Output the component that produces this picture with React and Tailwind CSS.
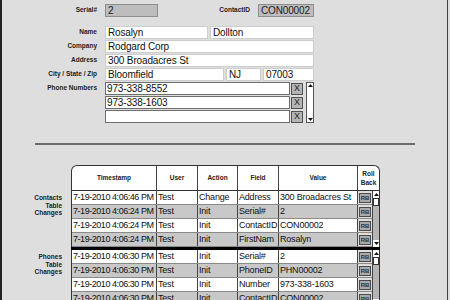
import React from 'react';

const label = "text-[6.5px] font-bold text-[#222] text-right leading-none whitespace-nowrap";
const field = "h-[13px] bg-white border border-[#cdcdcd] pl-[2px] text-[10px] tracking-[-0.15px] leading-[11px] text-[#111] whitespace-nowrap overflow-hidden";
const roField = "h-[13px] bg-[#bdbdbd] border border-[#8e8e8e] pl-[2px] text-[10px] tracking-[-0.15px] leading-[11px] text-[#222] whitespace-nowrap overflow-hidden";

const contacts = [
  ['7-19-2010 4:06:46 PM', 'Test', 'Change', 'Address', '300 Broadacres St'],
  ['7-19-2010 4:06:24 PM', 'Test', 'Init', 'Serial#', '2'],
  ['7-19-2010 4:06:24 PM', 'Test', 'Init', 'ContactID', 'CON00002'],
  ['7-19-2010 4:06:24 PM', 'Test', 'Init', 'FirstNam', 'Rosalyn'],
];

const phones = [
  ['7-19-2010 4:06:30 PM', 'Test', 'Init', 'Serial#', '2'],
  ['7-19-2010 4:06:30 PM', 'Test', 'Init', 'PhoneID', 'PHN00002'],
  ['7-19-2010 4:06:30 PM', 'Test', 'Init', 'Number', '973-338-1603'],
  ['7-19-2010 4:06:30 PM', 'Test', 'Init', 'ContactID', 'CON00002'],
];

const Up = () => (
  <svg width="5" height="3" viewBox="0 0 5 3"><path d="M0 3 L2.5 0 L5 3 Z" fill="#111" /></svg>
);
const Down = () => (
  <svg width="5" height="3" viewBox="0 0 5 3"><path d="M0 0 L2.5 3 L5 0 Z" fill="#111" /></svg>
);

const cell = "h-full border-r border-[#444] pl-[1px] overflow-hidden whitespace-nowrap flex items-center";

const TableGroup = ({ rows, title }) => (
  <div className="flex">
    <div className="w-[69px] pr-[9px] pt-[3px] text-[6.5px] font-bold text-[#222] text-right leading-[7.5px]">
      {title.map((t) => <div key={t}>{t}</div>)}
    </div>
    <div className="flex border-x border-[#333]">
      <div className="flex flex-col">
        {rows.map((r, i) => (
          <div key={i} className={`flex h-[14px] border-b border-[#8a8a8a] text-[9px] tracking-[-0.2px] text-[#111] ${i % 2 ? 'bg-[#c8c8c8]' : 'bg-white'}`}>
            <div className={`${cell} w-[85px] tracking-[-0.45px]`}>{r[0]}</div>
            <div className={`${cell} w-[41px]`}>{r[1]}</div>
            <div className={`${cell} w-[40px]`}>{r[2]}</div>
            <div className={`${cell} w-[41px]`}>{r[3]}</div>
            <div className={`${cell} w-[79px]`}>{r[4]}</div>
            <div className="w-[14px] h-full flex items-center justify-center bg-[#dedede]">
              <div className="w-[12px] h-[10px] bg-[#a9a9a9] border border-[#4a4a4a] text-[6px] font-bold text-[#333] leading-none tracking-normal flex items-center justify-center">RB</div>
            </div>
          </div>
        ))}
      </div>
      <div className="w-[7px] flex flex-col bg-[#b5b5b5] border-l border-[#444]">
        <div className="h-[7px] bg-white flex items-center justify-center"><Up /></div>
        <div className="h-[8px] bg-white border border-[#333]" />
        <div className="flex-1" />
        <div className="h-[7px] bg-white flex items-center justify-center"><Down /></div>
      </div>
    </div>
  </div>
);

export default function App() {
  return (
    <div className="w-[450px] h-[300px] overflow-hidden bg-[#dedede] font-['Liberation_Sans',Arial,sans-serif]">
      <div className="w-[448px] h-[300px] border-l-2 border-r border-l-[#222] border-r-[#444] overflow-hidden">
        <div className="pt-[4px]">
          <div className="flex items-center h-[13px]">
            <div className={`w-[95px] ${label}`}>Serial#</div>
            <div className={`ml-[8px] w-[53px] ${roField}`}>2</div>
            <div className={`w-[92px] ${label}`}>ContactID</div>
            <div className={`ml-[8px] w-[56px] ${roField}`}>CON00002</div>
          </div>

          <div className="flex flex-col gap-[1px] mt-[9px]">
            <div className="flex items-center">
              <div className={`w-[95px] ${label}`}>Name</div>
              <div className={`ml-[8px] w-[103px] ${field}`}>Rosalyn</div>
              <div className={`ml-[2px] w-[104px] ${field}`}>Dollton</div>
            </div>
            <div className="flex items-center">
              <div className={`w-[95px] ${label}`}>Company</div>
              <div className={`ml-[8px] w-[209px] ${field}`}>Rodgard Corp</div>
            </div>
            <div className="flex items-center">
              <div className={`w-[95px] ${label}`}>Address</div>
              <div className={`ml-[8px] w-[209px] ${field}`}>300 Broadacres St</div>
            </div>
            <div className="flex items-center">
              <div className={`w-[95px] ${label}`}>City / State / Zip</div>
              <div className={`ml-[8px] w-[119px] ${field}`}>Bloomfield</div>
              <div className={`ml-[2px] w-[35px] ${field}`}>NJ</div>
              <div className={`ml-[2px] w-[51px] ${field}`}>07003</div>
            </div>

            <div className="flex">
              <div className={`w-[95px] h-[13px] flex items-center justify-end ${label}`}>Phone Numbers</div>
              <div className="ml-[8px] flex">
                <div className="flex flex-col gap-[1px]">
                  {['973-338-8552', '973-338-1603', ''].map((p, i) => (
                    <div key={i} className="flex items-center gap-[1px]">
                      <div className="w-[185px] h-[13px] bg-white border border-[#6e6e6e] pl-[1px] text-[10px] tracking-[-0.15px] leading-[11px] text-[#111]">{p}</div>
                      <div className="w-[12px] h-[12px] bg-[#b4b4b4] border border-[#505050] text-[9px] leading-none text-[#222] flex items-center justify-center">X</div>
                    </div>
                  ))}
                </div>
                <div className="ml-[3px] w-[8px] h-[41px] bg-white border border-[#555] flex flex-col justify-between items-center py-[1px]">
                  <Up />
                  <Down />
                </div>
              </div>
            </div>
          </div>

          <div className="mt-[20px] ml-[33px] w-[380px] h-[2px] bg-[#6a6a6a]" />

          <div className="mt-[20px]">
            <div className="flex">
              <div className="w-[69px]" />
              <div className="flex h-[25px] bg-white border border-b-0 border-[#333] rounded-t-[6px] overflow-hidden text-[6.5px] font-bold text-[#222]">
                <div className="w-[85px] border-r border-[#444] flex items-center justify-center">Timestamp</div>
                <div className="w-[41px] border-r border-[#444] flex items-center justify-center">User</div>
                <div className="w-[40px] border-r border-[#444] flex items-center justify-center">Action</div>
                <div className="w-[41px] border-r border-[#444] flex items-center justify-center">Field</div>
                <div className="w-[79px] border-r border-[#444] flex items-center justify-center">Value</div>
                <div className="w-[21px] flex flex-col items-center justify-center leading-[9px] text-center">
                  <div>Roll</div>
                  <div>Back</div>
                </div>
              </div>
            </div>
            <div className="flex">
              <div className="w-[69px]" />
              <div className="w-[309px] h-[1px] bg-[#333]" />
            </div>
            <TableGroup rows={contacts} title={['Contacts', 'Table', 'Changes']} />
            <div className="flex">
              <div className="w-[69px]" />
              <div className="w-[309px] h-[3px] bg-black" />
            </div>
            <TableGroup rows={phones} title={['Phones', 'Table', 'Changes']} />
          </div>
        </div>
      </div>
    </div>
  );
}
